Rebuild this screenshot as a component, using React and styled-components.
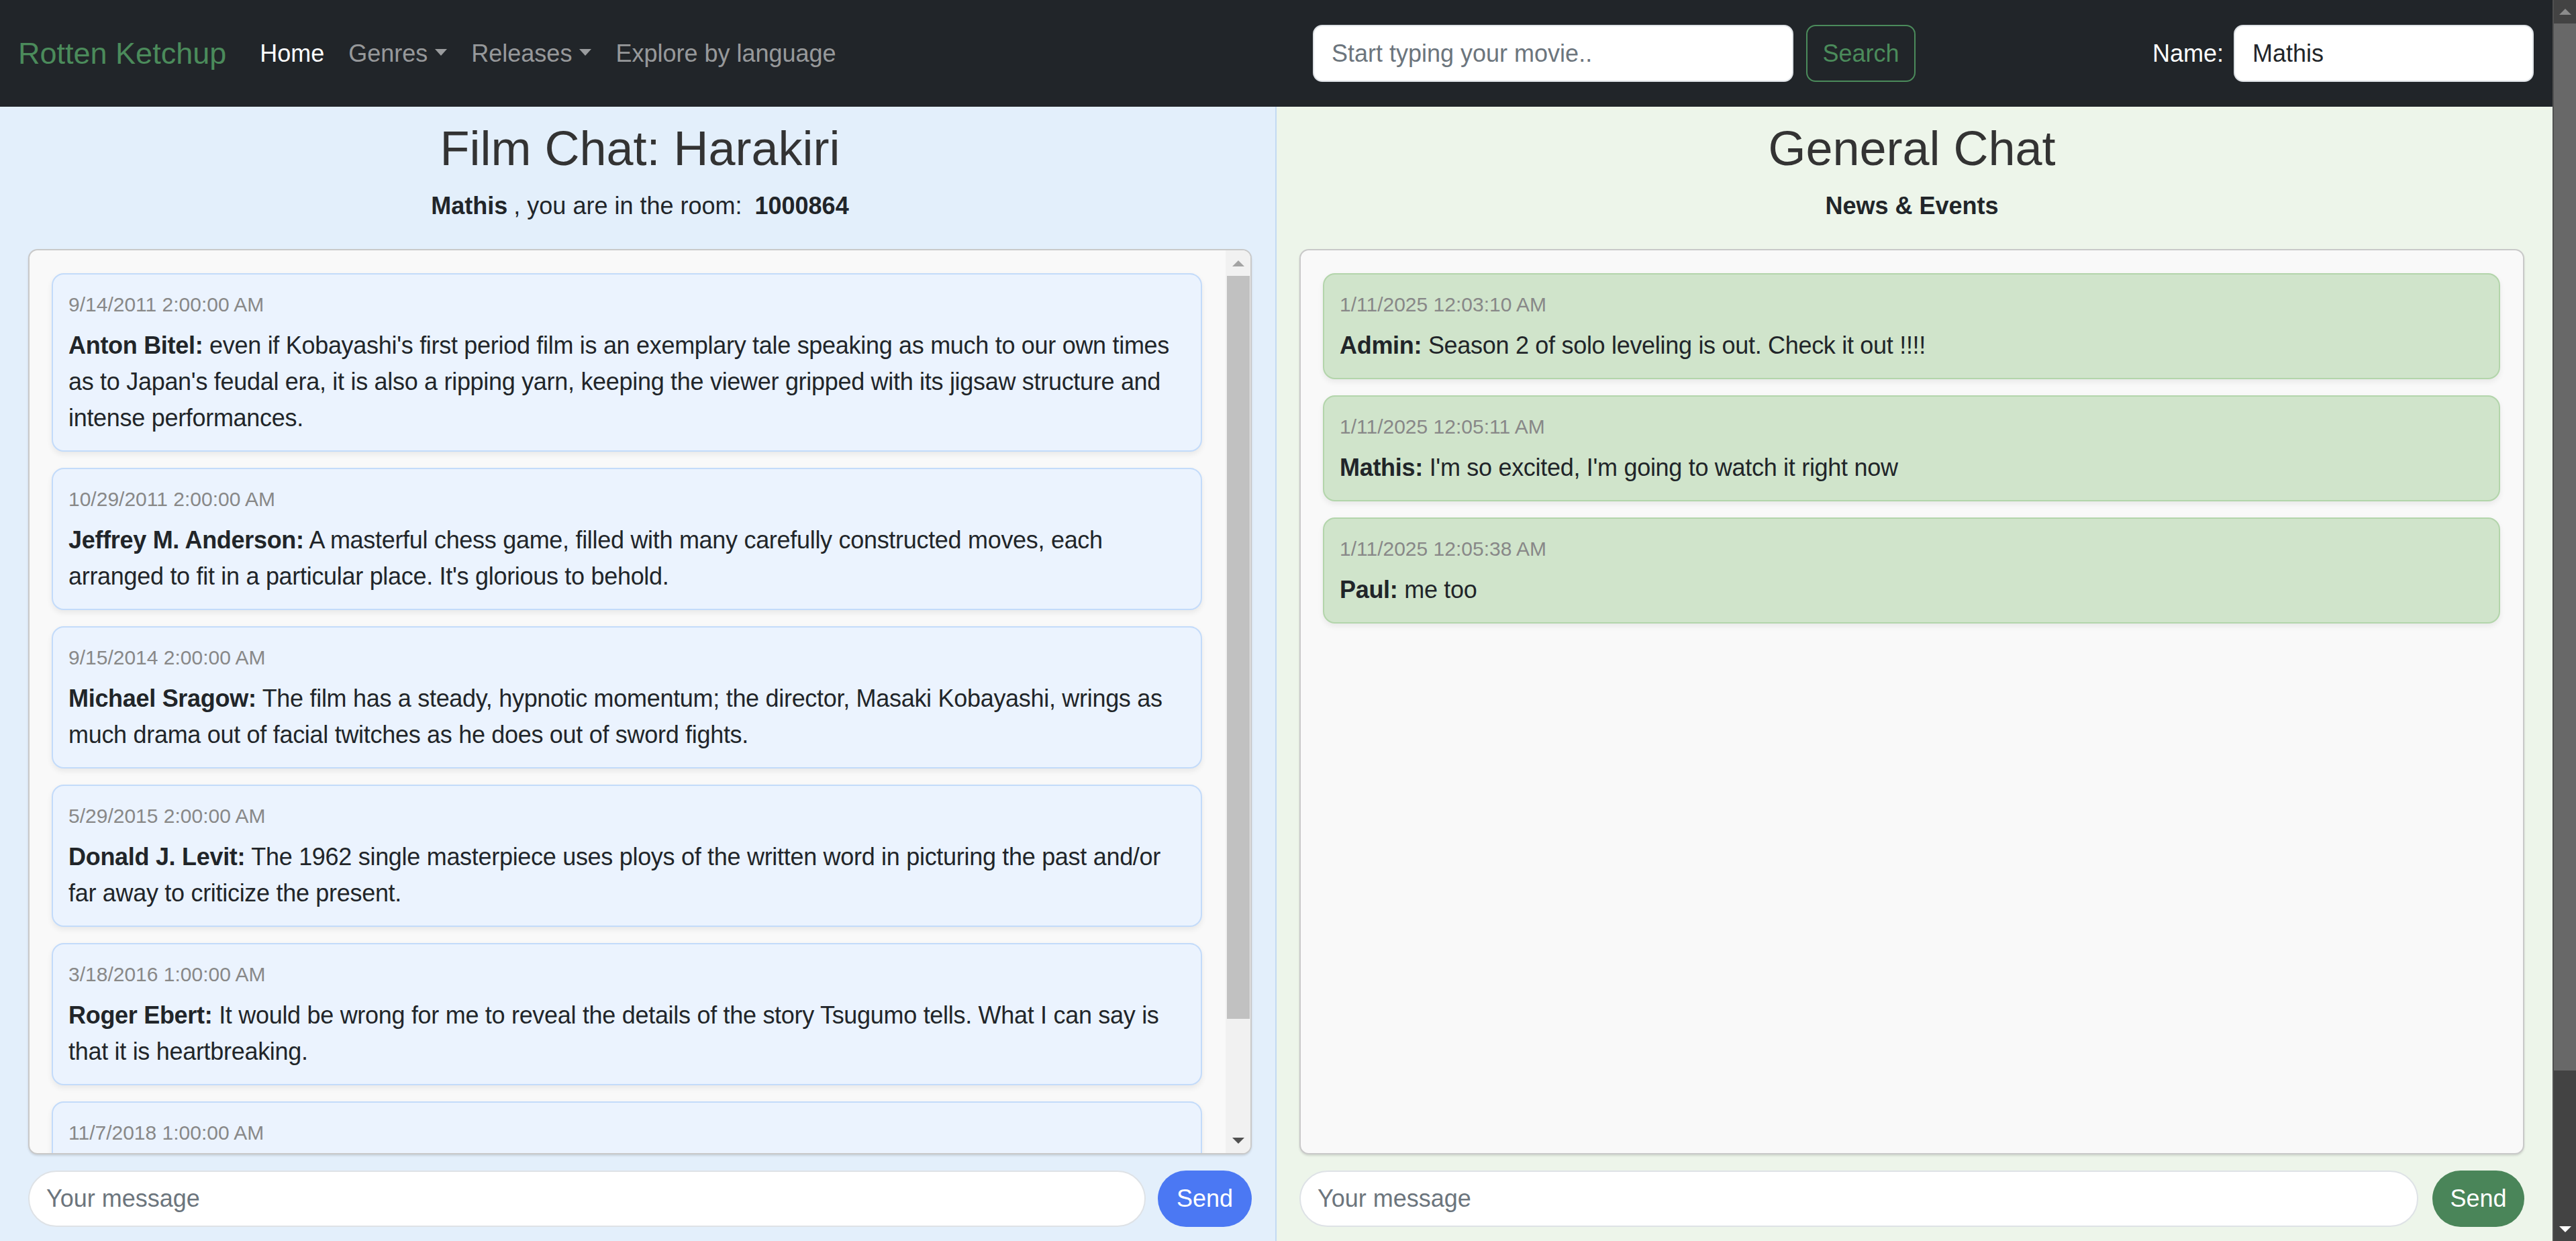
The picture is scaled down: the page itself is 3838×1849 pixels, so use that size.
import React from 'react'
import styled, { createGlobalStyle, css } from 'styled-components'

const filmMessages = [
  {
    date: '9/14/2011 2:00:00 AM',
    author: 'Anton Bitel',
    text: "even if Kobayashi's first period film is an exemplary tale speaking as much to our own times as to Japan's feudal era, it is also a ripping yarn, keeping the viewer gripped with its jigsaw structure and intense performances.",
  },
  {
    date: '10/29/2011 2:00:00 AM',
    author: 'Jeffrey M. Anderson',
    text: "A masterful chess game, filled with many carefully constructed moves, each arranged to fit in a particular place. It's glorious to behold.",
  },
  {
    date: '9/15/2014 2:00:00 AM',
    author: 'Michael Sragow',
    text: 'The film has a steady, hypnotic momentum; the director, Masaki Kobayashi, wrings as much drama out of facial twitches as he does out of sword fights.',
  },
  {
    date: '5/29/2015 2:00:00 AM',
    author: 'Donald J. Levit',
    text: 'The 1962 single masterpiece uses ploys of the written word in picturing the past and/or far away to criticize the present.',
  },
  {
    date: '3/18/2016 1:00:00 AM',
    author: 'Roger Ebert',
    text: 'It would be wrong for me to reveal the details of the story Tsugumo tells. What I can say is that it is heartbreaking.',
  },
  // the last card is cut off by the list, only its date shows
  { date: '11/7/2018 1:00:00 AM' },
]

const generalMessages = [
  { date: '1/11/2025 12:03:10 AM', author: 'Admin', text: 'Season 2 of solo leveling is out. Check it out !!!!' },
  { date: '1/11/2025 12:05:11 AM', author: 'Mathis', text: "I'm so excited, I'm going to watch it right now" },
  { date: '1/11/2025 12:05:38 AM', author: 'Paul', text: 'me too' },
]

const GlobalStyle = createGlobalStyle`
  * { box-sizing: border-box; }
  html, body { margin: 0; padding: 0; overflow: hidden; }
  body {
    font-family: "Liberation Sans", Arial, sans-serif;
    color: #212529;
    background: #212529;
  }
  input::placeholder { color: #6c757d; opacity: 1; }
`

const Page = styled.div`
  display: flex;
  width: 3838px;
  height: 1849px;
`

const Main = styled.div`
  flex: 1;
  min-width: 0;
  display: flex;
  flex-direction: column;
`

const NavBar = styled.nav`
  height: 159px;
  flex-shrink: 0;
  background: #212529;
  display: flex;
  align-items: center;
  padding: 0 28px 0 27px;
`

const Brand = styled.a`
  font-size: 45px;
  color: #4b8b5b;
  margin-right: 32px;
  white-space: nowrap;
`

const NavList = styled.ul`
  display: flex;
  list-style: none;
  margin: 0;
  padding: 0;
`

const NavItem = styled.li`
  font-size: 36px;
  line-height: 54px;
  padding: 0 18px;
  white-space: nowrap;
  color: ${p => (p.$active ? '#ffffff' : 'rgba(255, 255, 255, 0.55)')};
  ${p =>
    p.$dropdown &&
    css`
      &::after {
        content: '';
        display: inline-block;
        margin-left: 11px;
        vertical-align: 9px;
        border-top: 10px solid;
        border-right: 9px solid transparent;
        border-left: 9px solid transparent;
        border-bottom: 0;
      }
    `}
`

const SearchForm = styled.form`
  display: flex;
  align-items: center;
  margin: 0 353px 0 auto;
`

const NavInput = styled.input`
  width: ${p => p.$w}px;
  height: 85px;
  background: #fff;
  border: 2px solid #dee2e6;
  border-radius: 14px;
  padding: 0 26px;
  font-family: inherit;
  font-size: 36px;
  color: #212529;
  outline: none;
`

const OutlineButton = styled.button`
  height: 85px;
  width: 163px;
  margin-left: 19px;
  background: transparent;
  border: 2px solid #4b8b5b;
  border-radius: 14px;
  color: #4b8b5b;
  font-family: inherit;
  font-size: 36px;
`

const NameGroup = styled.div`
  display: flex;
  align-items: center;
`

const NameLabel = styled.label`
  color: #fff;
  font-size: 36px;
  margin-right: 15px;
`

const Panels = styled.div`
  flex: 1;
  min-height: 0;
  display: flex;
`

const Panel = styled.section`
  display: flex;
  flex-direction: column;
  min-width: 0;
  ${p =>
    p.$variant === 'film'
      ? css`
          width: 1902px;
          flex-shrink: 0;
          background: #e3effb;
          border-right: 2px solid #c3daf3;
          padding: 19px 35px 21px 42px;
        `
      : css`
          flex: 1;
          background: #edf5ea;
          padding: 19px 42px 21px 34px;
        `}
`

const Title = styled.h2`
  margin: 0 0 16px;
  font-size: 72px;
  line-height: 86px;
  font-weight: 500;
  color: #333;
  text-align: center;
`

const Subtitle = styled.p`
  margin: 0 0 37px;
  font-size: 36px;
  line-height: 54px;
  text-align: center;
`

const Strong = styled.strong`
  margin: 0 ${p => (p.$spaced ? 9 : 0)}px;
`

const ChatBox = styled.div`
  flex: 1;
  min-height: 0;
  display: flex;
  background: #f9f9f9;
  border: 2px solid #c9c9c9;
  border-radius: 14px;
  box-shadow: 0 2px 3px rgba(0, 0, 0, 0.12);
  overflow: hidden;
`

const MessageList = styled.div`
  flex: 1;
  min-width: 0;
  overflow: hidden;
  padding: 34px ${p => p.$right}px 0 33px;
`

const Card = styled.div`
  border: 2px solid ${p => (p.$tone === 'green' ? '#b3d5ab' : '#c3dbfa')};
  background: ${p => (p.$tone === 'green' ? '#d0e4cb' : '#ebf3fe')};
  border-radius: 18px;
  padding: 23px 23px 21px;
  margin-bottom: 24px;
  box-shadow: 0 4px 8px rgba(0, 0, 0, 0.07);
`

const Stamp = styled.div`
  font-size: 30px;
  line-height: 44px;
  color: #888;
  margin-bottom: 12px;
`

const Body = styled.div`
  font-size: 36px;
  line-height: 54px;
  letter-spacing: -0.3px;
  color: #212529;
`

const ScrollTrack = styled.div`
  flex-shrink: 0;
  width: ${p => p.$w}px;
  background: ${p => p.$track};
  display: flex;
  flex-direction: column;
  ${p => p.$edge && css`border-left: 2px solid ${p.$edge};`}
`

const ScrollArrow = styled.div`
  height: ${p => p.$h}px;
  flex-shrink: 0;
  display: flex;
  align-items: center;
  justify-content: center;
  &::after {
    content: '';
    border-left: 9px solid transparent;
    border-right: 9px solid transparent;
    ${p =>
      p.$down
        ? css`border-top: 9px solid ${p.$color};`
        : css`border-bottom: 9px solid ${p.$color};`}
  }
`

const ScrollThumb = styled.div`
  height: ${p => p.$h}px;
  flex-shrink: 0;
  background: ${p => p.$color};
  margin: ${p => p.$margin || 0};
`

const ScrollRest = styled.div`
  flex: 1;
`

const InputRow = styled.div`
  display: flex;
  align-items: center;
  gap: ${p => p.$gap}px;
  margin-top: 24px;
  flex-shrink: 0;
`

const MessageInput = styled.input`
  flex: 1;
  min-width: 0;
  height: 84px;
  background: #fff;
  border: 2px solid #dee2e6;
  border-radius: 42px;
  padding: 0 25px;
  font-family: inherit;
  font-size: 36px;
  outline: none;
`

const SendButton = styled.button`
  width: ${p => p.$w}px;
  height: 84px;
  border: none;
  border-radius: 50px;
  background: ${p => p.$color};
  color: #fff;
  font-family: inherit;
  font-size: 36px;
`

function Message({ msg, tone }) {
  return (
    <Card $tone={tone}>
      <Stamp>{msg.date}</Stamp>
      {msg.author && (
        <Body>
          <strong>{msg.author}:</strong> {msg.text}
        </Body>
      )}
    </Card>
  )
}

function App() {
  return (
    <>
      <GlobalStyle />
      <Page>
        <Main>
          <NavBar>
            <Brand>Rotten Ketchup</Brand>
            <NavList>
              <NavItem $active>Home</NavItem>
              <NavItem $dropdown>Genres</NavItem>
              <NavItem $dropdown>Releases</NavItem>
              <NavItem>Explore by language</NavItem>
            </NavList>
            <SearchForm onSubmit={e => e.preventDefault()}>
              <NavInput $w={716} placeholder="Start typing your movie.." />
              <OutlineButton type="button">Search</OutlineButton>
            </SearchForm>
            <NameGroup>
              <NameLabel>Name:</NameLabel>
              <NavInput $w={447} defaultValue="Mathis" />
            </NameGroup>
          </NavBar>

          <Panels>
            <Panel $variant="film">
              <Title>Film Chat: Harakiri</Title>
              <Subtitle>
                <Strong $spaced>Mathis</Strong>, you are in the room: <Strong $spaced>1000864</Strong>
              </Subtitle>
              <ChatBox>
                <MessageList $right={35}>
                  {filmMessages.map(m => (
                    <Message key={m.date} msg={m} tone="blue" />
                  ))}
                </MessageList>
                <ScrollTrack $w={37} $track="#f1f1f1">
                  <ScrollArrow $h={38} $color="#a3a3a3" />
                  <ScrollThumb $h={1107} $color="#c1c1c1" $margin="0 1px 0 2px" />
                  <ScrollRest />
                  <ScrollArrow $h={38} $down $color="#505050" />
                </ScrollTrack>
              </ChatBox>
              <InputRow $gap={18}>
                <MessageInput placeholder="Your message" />
                <SendButton $w={140} $color="#4b78f3">Send</SendButton>
              </InputRow>
            </Panel>

            <Panel $variant="general">
              <Title>General Chat</Title>
              <Subtitle>
                <strong>News &amp; Events</strong>
              </Subtitle>
              <ChatBox>
                <MessageList $right={34}>
                  {generalMessages.map(m => (
                    <Message key={m.date} msg={m} tone="green" />
                  ))}
                </MessageList>
              </ChatBox>
              <InputRow $gap={21}>
                <MessageInput placeholder="Your message" />
                <SendButton $w={137} $color="#4a8559">Send</SendButton>
              </InputRow>
            </Panel>
          </Panels>
        </Main>

        <ScrollTrack $w={35} $track="#434343" $edge="#505050">
          <ScrollArrow $h={35} $color="#8c8c8c" />
          <ScrollThumb $h={1560} $color="#686868" />
          <ScrollRest />
          <ScrollArrow $h={35} $down $color="#ffffff" />
        </ScrollTrack>
      </Page>
    </>
  )
}

export default App
